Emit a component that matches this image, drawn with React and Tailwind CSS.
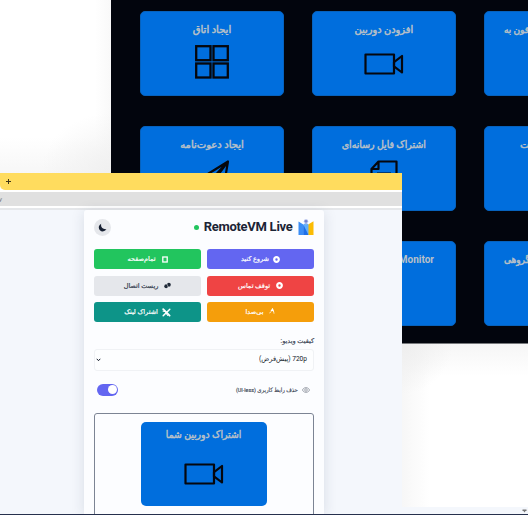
import React from "react";

const FA = "font-['Roboto','DejaVu_Sans',sans-serif]";

function CameraIcon({ className }) {
  return (
    <svg viewBox="0 0 40 22" className={className} fill="none" stroke="#05070d" strokeWidth="2.2" strokeLinejoin="round">
      <rect x="1.5" y="1.5" width="28.5" height="19" />
      <path d="M38 3v16.5L30 13.4V9.2z" />
    </svg>
  );
}

function GridIcon() {
  return (
    <svg viewBox="0 0 34 34" className="h-[34px] w-[34px]" fill="none" stroke="#05070d" strokeWidth="2.3">
      <rect x="1.2" y="1.2" width="14.300" height="14" />
      <rect x="18.500" y="1.2" width="14.300" height="14" />
      <rect x="1.2" y="18.500" width="14.300" height="14" />
      <rect x="18.500" y="18.500" width="14.300" height="14" />
    </svg>
  );
}

function PlaneIcon() {
  return (
    <svg viewBox="0 0 34 34" className="h-[34px] w-[34px]" fill="none" stroke="#05070d" strokeWidth="2.2" strokeLinejoin="round">
      <path d="M33 1.500L1.500 21l10 4zM33 1.500L15 25.500l13 5zM15 25.500V33l4-6" />
    </svg>
  );
}

function FileIcon() {
  return (
    <svg viewBox="0 0 28 34" className="h-[34px] w-[28px]" fill="none" stroke="#05070d" strokeWidth="2.2" strokeLinejoin="round">
      <path d="M8.500 1.500H26.500V32.500H1.500V9zM8.500 1.500V9H1.500M7 13.500h14M7 19h14" />
    </svg>
  );
}

function Tile({ title, titleClass, children }) {
  return (
    <div className="flex h-[85px] w-36 flex-col items-center overflow-hidden rounded-[5px] border border-[#0662bd] bg-[#006edd]">
      <div dir="rtl" className={`mt-[9px] h-[18px] whitespace-nowrap leading-[18px] text-[#b8c0c8] ${titleClass}`}>{title}</div>
      <div className="mt-1.5 flex h-[34px] items-center justify-center">{children}</div>
    </div>
  );
}

function ActionButton({ label, icon, className, labelClass }) {
  return (
    <button className={`flex h-5 items-center justify-center rounded-[3px] text-white ${className}`}>
      {icon}
      <span className={`whitespace-nowrap leading-5 ${labelClass}`}>{label}</span>
    </button>
  );
}

function RingIcon() {
  return (
    <svg viewBox="0 0 7 7" className="h-[7px] w-[7px]">
      <circle cx="3.500" cy="3.500" r="2.300" fill="none" stroke="white" strokeWidth="2.200" />
    </svg>
  );
}

function SquareIcon() {
  return (
    <svg viewBox="0 0 6 7" className="h-[7px] w-[6px]">
      <rect x=".8" y="1" width="4.400" height="5" fill="none" stroke="white" strokeWidth="1.300" />
    </svg>
  );
}

function LinkIcon() {
  return (
    <svg viewBox="0 0 7 7" className="h-[7px] w-[7px]">
      <ellipse cx="2.100" cy="4.200" rx="1.800" ry="2" fill="#1f2937" />
      <ellipse cx="4.900" cy="2.800" rx="1.900" ry="2" fill="#1f2937" />
      <path d="M3.100 2.200l1 2.800" stroke="#e5e7eb" strokeWidth=".5" />
    </svg>
  );
}

function ToolsIcon() {
  return (
    <svg viewBox="0 0 9 9" className="h-[9px] w-[9px]" fill="none" stroke="white" strokeLinecap="round">
      <path d="M1.200 1.200l6.400 6.400" strokeWidth="1.800" />
      <path d="M7.800 1.200L1.200 7.700" strokeWidth="1.500" />
      <path d="M4 5l1.500 2.500M1 3.200l2 .3" strokeWidth="1" />
    </svg>
  );
}

function MuteIcon() {
  return (
    <svg viewBox="0 0 6 6" className="mb-[3px] h-[6px] w-[6px]" fill="none" stroke="white">
      <path d="M1.800 3.500L3.500 1l1.200 2.700" strokeWidth="1.200" />
      <path d="M.3 5l1.500-.6M4 4.800l1.700.2" strokeWidth=".7" />
    </svg>
  );
}

function Logo() {
  return (
    <svg viewBox="0 0 16 18" className="h-[18px] w-4">
      <path d="M.5 3.500L5.300 6.500V17H.5z" fill="#3b8df5" />
      <path d="M5.300 6.500L8 4.800l3 2V17H5.300z" fill="#62aefa" />
      <path d="M5.300 6.500L10.500 17H5.300z" fill="#1e6fe8" />
      <path d="M10.500 6.300L15.500 3.300V17h-5z" fill="#fbbc04" />
      <path d="M5.800 3.500a2.200 2.200 0 1 1 4.400 0L8 7z" fill="#a8b5e8" />
      <circle cx="8" cy="3.200" r="1.200" fill="#7180d0" />
    </svg>
  );
}

function BackPanel() {
  return (
    <section className="absolute left-[111px] top-0 h-[344px] w-[417px] overflow-hidden border-b border-[#77797c] bg-[#02050d]">
      <div className="grid grid-cols-[144px_144px_144px] gap-x-7 gap-y-[30px] pl-[29px] pt-[11px]">
        <Tile title="ایجاد اتاق" titleClass="text-[10px] [-webkit-text-stroke:0.5px_#b8c0c8]"><GridIcon /></Tile>
        <Tile title="افزودن دوربین" titleClass="text-[10px] scale-x-[0.98] [-webkit-text-stroke:0.5px_#b8c0c8]"><CameraIcon className="mt-[3px] h-[22px] w-10" /></Tile>
        <Tile title="فون به" titleClass="self-start origin-left pl-[21px] scale-x-[0.9] text-[10px] [-webkit-text-stroke:0.5px_#b8c0c8]" />
        <Tile title="ایجاد دعوت‌نامه" titleClass="text-[10px] [-webkit-text-stroke:0.5px_#b8c0c8]"><PlaneIcon /></Tile>
        <Tile title="اشتراک فایل رسانه‌ای" titleClass="text-[10px] scale-x-[0.94] [-webkit-text-stroke:0.5px_#b8c0c8]"><FileIcon /></Tile>
        <Tile title="ت" titleClass="self-start pl-[35px] text-[10px] [-webkit-text-stroke:0.5px_#b8c0c8]" />
        <Tile title="" titleClass="text-[10px]" />
        <Tile title="Monitor" titleClass="self-end pr-[21px] text-[10px] font-bold" />
        <Tile title="گروهی" titleClass="self-start origin-left pl-[21px] scale-x-[0.9] text-[10px] [-webkit-text-stroke:0.5px_#b8c0c8]" />
      </div>
    </section>
  );
}

function ControlCard() {
  return (
    <main dir="rtl" className="mx-auto h-full w-60 rounded-t-[3px] bg-[#fcfdff] px-2.5 pt-2 shadow-[0_2px_14px_rgba(30,50,80,0.13)]">
      <header className="flex h-[18px] items-center">
        <Logo />
        <h1 dir="ltr" className="mr-[5.500px] whitespace-nowrap font-['Roboto',sans-serif] text-[13px] font-bold leading-[18px] tracking-[-0.28px] text-[#1b2436]">RemoteVM Live</h1>
        <span className="mr-[5px] h-[5px] w-[5px] rounded-full bg-[#22c55e]" />
        <button className="mr-auto flex h-[17px] w-[17px] items-center justify-center rounded-full bg-[#e5e7eb]">
          <svg viewBox="0 0 9 9" className="h-[9px] w-[9px]">
            <path d="M3.200.7C2.300 4 4.800 6.600 8.400 6.100A4 4 0 1 1 3.200.7z" fill="#172033" />
          </svg>
        </button>
      </header>

      <div className="mt-[13px] grid grid-cols-[107px_107px] gap-x-[6px] gap-y-[6.500px]">
        <ActionButton label="شروع کنید" icon={<RingIcon />} className="gap-1 bg-[#6366f1]" labelClass="text-[6.500px] [-webkit-text-stroke:0.2px_white]" />
        <ActionButton label="تمام‌صفحه" icon={<SquareIcon />} className="gap-1.5 bg-[#22c55e]" labelClass="text-[6.500px] [-webkit-text-stroke:0.2px_white]" />
        <ActionButton label="توقف تماس" icon={<RingIcon />} className="gap-1.5 bg-[#ef4444]" labelClass="text-[6.500px] [-webkit-text-stroke:0.2px_white]" />
        <ActionButton label="ریست اتصال" icon={<LinkIcon />} className="gap-1.5 bg-[#e5e7eb] !text-[#374151]" labelClass="text-[6.500px] [-webkit-text-stroke:0.2px_#374151]" />
        <ActionButton label="بی‌صدا" icon={<MuteIcon />} className="gap-1.5 bg-[#f59e0b]" labelClass="text-[6.500px] [-webkit-text-stroke:0.2px_white]" />
        <ActionButton label="اشتراک لینک" icon={<ToolsIcon />} className="gap-1 bg-[#0d9488]" labelClass="text-[6.500px] [-webkit-text-stroke:0.2px_white]" />
      </div>

      <div className="mt-[13px] h-3 whitespace-nowrap text-[6.500px] leading-3 text-[#374151] [-webkit-text-stroke:0.15px_#374151]">کیفیت ویدیو:</div>
      <div className="mt-[1.500px] flex h-[22px] items-center justify-between rounded-[3px] border border-[#f0f2f5] bg-[#fdfeff] pl-[1px] pr-1.5 text-[#111827]">
        <span className="origin-right scale-x-[0.94] whitespace-nowrap text-[7px]">720p (پیش‌فرض)</span>
        <svg viewBox="0 0 5 4" className="h-1 w-[5px]" fill="none" stroke="#111827" strokeWidth="1">
          <path d="M.7.800l1.800 1.900L4.300.8" />
        </svg>
      </div>

      <div className="mt-[13px] flex h-3 items-center pl-[3px] pr-1">
        <svg viewBox="0 0 8 6" className="h-1.5 w-2" fill="none" stroke="#6b7280" strokeWidth=".6">
          <path d="M.4 3C2-.2 6-.2 7.600 3 6 6.200 2 6.200.4 3z" />
          <circle cx="4" cy="3" r="1.300" />
        </svg>
        <span className="mr-1 origin-right scale-x-90 whitespace-nowrap text-[6px] leading-3 text-[#374151] [-webkit-text-stroke:0.15px_#374151]">حذف رابط کاربری (UI-less)</span>
        <button className="mr-auto flex h-3 w-[21px] items-center justify-start rounded-full bg-[#6366f1] pr-[1px]">
          <span className="h-[9px] w-[9px] rounded-full bg-white" />
        </button>
      </div>

      <div className="mt-[17px] flex h-[130px] flex-col items-center gap-2 rounded-[3px] border border-[#7c8494] pt-2">
        <div className="flex h-[84px] w-[126px] shrink-0 flex-col items-center rounded-[5px] bg-[#006edd]">
          <div className="mt-1 h-[18px] scale-x-[0.93] whitespace-nowrap text-[10px] leading-[18px] text-[#b8c0c8] [-webkit-text-stroke:0.5px_#b8c0c8]">اشتراک دوربین شما</div>
          <CameraIcon className="mt-[19px] h-[22px] w-10" />
        </div>
        <div className="h-[84px] w-[126px] shrink-0 rounded-[5px] bg-[#006edd]" />
      </div>
    </main>
  );
}

function FrontWindow() {
  return (
    <section className="absolute left-0 top-[173px] flex h-[341px] w-[402px] flex-col overflow-hidden bg-white">
      <div className="flex h-[17px] shrink-0 items-center rounded-bl-[5px] bg-[#ffdc5e] pl-1.5">
        <svg viewBox="0 0 5 5" className="h-[5px] w-[5px]" stroke="#403718" strokeWidth="1">
          <path d="M2.500 0v5M0 2.500h5" />
        </svg>
      </div>
      <div className="mt-[2px] flex h-[14px] shrink-0 items-center bg-[#e0e0e0] font-['Liberation_Sans',sans-serif] text-[6px] leading-[14px] text-[#666]">
        <span className="-ml-[1px]">y</span>
      </div>
      <div className="mt-[2px] h-[2px] shrink-0 bg-[#e5e7ea]" />
      <div className="min-h-0 flex-1 bg-[#f4f7fc] pl-[6px]">
        <ControlCard />
      </div>
    </section>
  );
}

export default function App() {
  return (
    <div className={`relative h-[515px] w-[528px] overflow-hidden bg-white ${FA}`}>
      <div className="absolute left-0 top-0 h-[173px] w-[111px] bg-[radial-gradient(ellipse_70px_60px_at_100%_100%,#f0f0f0_0%,rgba(248,248,248,0)_100%),linear-gradient(to_top,#f7f7f7_0px,rgba(255,255,255,0)_36px),linear-gradient(to_left,#f9f9f9_0px,#ffffff_16px)]" />
      <div className="absolute left-[402px] top-[344px] h-[163px] w-[126px] bg-[radial-gradient(ellipse_50px_50px_at_0%_0%,#eeeeee_0%,rgba(248,248,248,0)_100%),linear-gradient(to_right,#f7f7f7_0px,rgba(255,255,255,0)_28px),linear-gradient(to_bottom,#f6f6f6_0px,#ffffff_32px)]" />
      <BackPanel />
      <FrontWindow />
      <footer className="absolute bottom-0 left-0 flex h-2 w-full flex-col justify-end">
        <div className="ml-[402px] flex h-[7px] items-center justify-end bg-[#f4f7fc]">
          <svg viewBox="0 0 5 4" className="mr-px h-1 w-[5px]">
            <path d="M.5.500h4v1.500h-1l-1 1.500-1-1.500h-1z" fill="#777" />
          </svg>
        </div>
        <div className="h-px bg-[#26304d]" />
      </footer>
    </div>
  );
}
